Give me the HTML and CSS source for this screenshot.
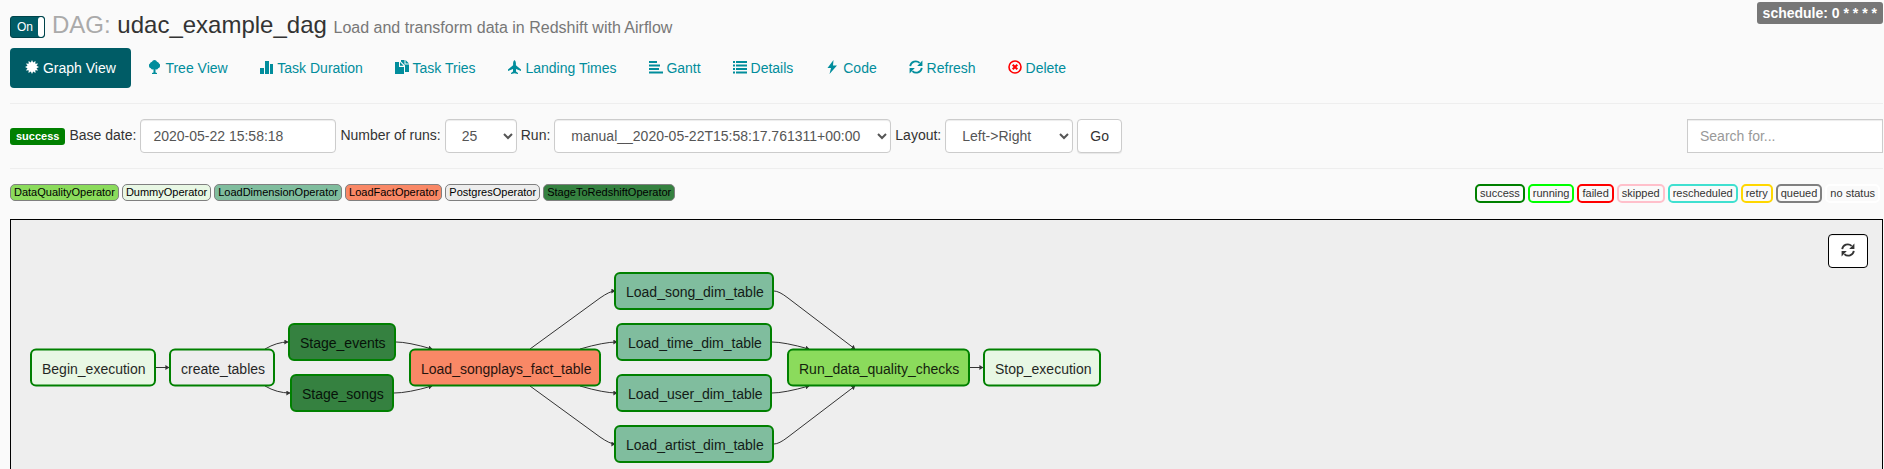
FILE: index.html
```html
<!DOCTYPE html>
<html lang="en">
<head>
<meta charset="utf-8">
<title>Airflow - DAGs</title>
<link rel="stylesheet" href="styles.css">
</head>
<body>
<svg class="sprite" aria-hidden="true">
  <symbol id="i-refresh" viewBox="0 0 14 14">
    <path d="M1.2 6.2A5.6 5.6 0 0 1 10.6 2.9M12.8 7.8A5.6 5.6 0 0 1 3.4 11.1" fill="none" stroke="currentColor" stroke-width="1.8"/>
    <path d="M13.4 0.6V6H8.2ZM.6 13.4V8H5.8Z" fill="currentColor"/>
  </symbol>
</svg>

<header class="heading">
  <button type="button" class="toggle" aria-pressed="true"><span class="toggle-label">On</span><span class="toggle-handle"></span></button>
  <h1 class="title"><span class="muted">DAG:</span> udac_example_dag <small class="description">Load and transform data in Redshift with Airflow</small></h1>
  <a href="#" class="schedule">schedule: 0 * * * *</a>
</header>

<nav class="pills">
  <a href="#" class="pill active"><svg class="icon" viewBox="0 0 14 14"><path d="M7 0L8.2 2.5 10.5 .9 10.3 3.7 13.1 3.5 11.5 5.8 14 7 11.5 8.2 13.1 10.5 10.3 10.3 10.5 13.1 8.2 11.5 7 14 5.8 11.5 3.5 13.1 3.7 10.3 .9 10.5 2.5 8.2 0 7 2.5 5.8 .9 3.5 3.7 3.7 3.5 .9 5.8 2.5z"/></svg> Graph View</a>
  <a href="#" class="pill"><svg class="icon" viewBox="0 0 14 14"><path d="M6.5 0Q8.4.1 9 1.7 10.9 2 11 3.6 12.5 4.3 12 6.2 12 7.8 10.2 8.2 9.4 9.8 7.5 9.3V12.5L9 13V14H4V13L5.5 12.5V9.3Q3.6 9.8 2.8 8.2 1 7.8 1 6.2 .5 4.3 2 3.6 2.1 2 4 1.7 4.6 .1 6.5 0Z"/></svg> Tree View</a>
  <a href="#" class="pill"><svg class="icon" viewBox="0 0 14 14"><path d="M0 8h4v6H0zM5 1h4v13H5zM10 4h3v10h-3z"/></svg> Task Duration</a>
  <a href="#" class="pill"><svg class="icon" viewBox="0 0 14 14"><path d="M0 2H4V7H9V14H0zM5 2L8.6 5.8H5zM6 0H9.5V4.5H14V12H10V5.5L6 1.5zM10.5 0L14 3.5H10.5z"/></svg> Task Tries</a>
  <a href="#" class="pill"><svg class="icon" viewBox="0 0 14 14"><path d="M6.5 0Q7.800.8 7.900 3V5.200L13 9.500V11L8 9V11.500L10 13V14L6.500 13.200 3 14V13L5 11.500V9L0 11V9.500L5.100 5.200V3Q5.200.8 6.500 0Z"/></svg> Landing Times</a>
  <a href="#" class="pill"><svg class="icon" viewBox="0 0 14 14"><path d="M0 1h8v2H0zM0 4.500h11v2H0zM0 8h10v2H0zM0 11.500h14v2H0z"/></svg> Gantt</a>
  <a href="#" class="pill"><svg class="icon" viewBox="0 0 14 14"><path d="M0 1h2v2H0zM3 1h11v2H3zM0 4.500h2v2H0zM3 4.500h11v2H3zM0 8h2v2H0zM3 8h11v2H3zM0 11.500h2v2H0zM3 11.500h11v2H3z"/></svg> Details</a>
  <a href="#" class="pill"><svg class="icon" viewBox="0 0 14 14"><path d="M8.500 0L2.500 8H6L4.500 14 12 5.500H8z"/></svg> Code</a>
  <a href="#" class="pill"><svg class="icon"><use href="#i-refresh"/></svg> Refresh</a>
  <a href="#" class="pill"><svg class="icon danger" viewBox="0 0 14 14"><circle cx="7" cy="7" r="6" fill="none" stroke="currentColor" stroke-width="1.6"/><path d="M4.700 4.700l4.600 4.600M9.300 4.700L4.700 9.300" fill="none" stroke="currentColor" stroke-width="2"/></svg> Delete</a>
</nav>

<section class="filters">
  <form class="form">
    <span class="state">success</span>
    <label for="base">Base date:</label>
    <input class="control" id="base" type="text" value="2020-05-22 15:58:18">
    <label for="runs">Number of runs:</label>
    <select class="control short" id="runs"><option>5</option><option selected>25</option><option>100</option></select>
    <label for="run">Run:</label>
    <select class="control long" id="run"><option>manual__2020-05-22T15:58:17.761311+00:00</option></select>
    <label for="layout">Layout:</label>
    <select class="control medium" id="layout"><option>Left-&gt;Right</option><option>Top-&gt;Bottom</option></select>
    <button class="control go" type="button">Go</button>
  </form>
  <input class="control search" type="text" placeholder="Search for..." aria-label="Search for">
</section>

<section class="legend">
  <div class="tags">
    <span class="operator quality">DataQualityOperator</span>
    <span class="operator dummy">DummyOperator</span>
    <span class="operator dimension">LoadDimensionOperator</span>
    <span class="operator fact">LoadFactOperator</span>
    <span class="operator postgres">PostgresOperator</span>
    <span class="operator stage">StageToRedshiftOperator</span>
  </div>
  <div class="tags">
    <span class="status success">success</span>
    <span class="status running">running</span>
    <span class="status failed">failed</span>
    <span class="status skipped">skipped</span>
    <span class="status rescheduled">rescheduled</span>
    <span class="status retry">retry</span>
    <span class="status queued">queued</span>
    <span class="status none">no status</span>
  </div>
</section>

<main class="canvas">
  <svg class="graph" width="1100" height="248" role="img" aria-label="Task graph">
    <defs>
      <marker id="arrow" viewBox="0 0 10 10" refX="9" refY="5" markerWidth="4" markerHeight="5" markerUnits="userSpaceOnUse" preserveAspectRatio="none" orient="auto"><path d="M0 0L10 5L0 10z" fill="#333"/></marker>
    </defs>
    <g transform="translate(-11 -220)">
      <g class="edges">
        <path d="M156 367.500H169"/>
        <path d="M265 349Q277 342 288 342"/>
        <path d="M265 386Q277 393 290 393"/>
        <path d="M396 342Q408 342 432 349"/>
        <path d="M394 393Q408 393 432 386"/>
        <path d="M530 349L600 298Q610 291 615 291"/>
        <path d="M580 349Q604 342 617 342"/>
        <path d="M580 386Q604 393 617 393"/>
        <path d="M530 386L600 437Q610 444 615 444"/>
        <path d="M774 291Q779 291 788 298L855 349"/>
        <path d="M772 342Q784 342 809 349"/>
        <path d="M772 393Q784 393 809 386"/>
        <path d="M774 444Q779 444 788 437L855 386"/>
        <path d="M970 367.500H983"/>
      </g>
      <g class="nodes">
        <rect class="dummy" x="31" y="349.500" width="124" height="36" rx="5"/><text x="42" y="374">Begin_execution</text>
        <rect class="postgres" x="170" y="349.500" width="104" height="36" rx="5"/><text x="181" y="374">create_tables</text>
        <rect class="stage" x="289" y="324" width="106" height="36" rx="5"/><text x="300" y="348">Stage_events</text>
        <rect class="stage" x="291" y="375" width="102" height="36" rx="5"/><text x="302" y="399">Stage_songs</text>
        <rect class="fact" x="410" y="349.500" width="190" height="36" rx="5"/><text x="421" y="374">Load_songplays_fact_table</text>
        <rect class="dimension" x="615" y="273" width="158" height="36" rx="5"/><text x="626" y="297">Load_song_dim_table</text>
        <rect class="dimension" x="617" y="324" width="154" height="36" rx="5"/><text x="628" y="348">Load_time_dim_table</text>
        <rect class="dimension" x="617" y="375" width="154" height="36" rx="5"/><text x="628" y="399">Load_user_dim_table</text>
        <rect class="dimension" x="615" y="426" width="158" height="36" rx="5"/><text x="626" y="450">Load_artist_dim_table</text>
        <rect class="quality" x="788" y="349.500" width="181" height="36" rx="5"/><text x="799" y="374">Run_data_quality_checks</text>
        <rect class="dummy" x="984" y="349.500" width="116" height="36" rx="5"/><text x="995" y="374">Stop_execution</text>
      </g>
    </g>
  </svg>
  <button class="control reload" type="button" aria-label="Refresh"><svg class="icon"><use href="#i-refresh"/></svg></button>
</main>
</body>
</html>
```

FILE: styles.css
```css
* { box-sizing: border-box; }

body {
  margin: 0;
  min-height: 100vh;
  padding: 2px 1px 0 10px;
  display: flex;
  flex-direction: column;
  background: #fafafa;
  color: #333;
  font: 14px/20px "Liberation Sans", Arial, sans-serif;
}

.sprite { display: none; }

.heading {
  display: flex;
  align-items: flex-start;
  gap: 7px;
  height: 46px;
}

.toggle {
  display: flex;
  width: 35px;
  height: 22px;
  margin-top: 14px;
  padding: 0;
  border: 1px solid #00434a;
  border-radius: 3px;
  overflow: hidden;
  background: #005c66;
  color: #fff;
  font: 12px/20px "Liberation Sans", Arial, sans-serif;
}

.toggle-label { flex: 1; padding-left: 1px; }

.toggle-handle {
  width: 6px;
  height: 20px;
  border-radius: 3px;
  background: #fff;
}

.title {
  flex: 1;
  margin: 9px 0 0;
  font-size: 24px;
  font-weight: 400;
  line-height: 28px;
}

.muted { color: #aaa; }
.description { font-size: 16px; color: #777; }

.schedule {
  padding: 0 6px;
  border-radius: 3px;
  background: #777;
  color: #fff;
  font-size: 14px;
  font-weight: 700;
  line-height: 22px;
  text-decoration: none;
}

.pills {
  display: flex;
  gap: 2px;
  padding-bottom: 15px;
  border-bottom: 1px solid #eee;
}

.pill {
  padding: 10px 15px;
  border-radius: 4px;
  color: #018d9c;
  text-decoration: none;
}

.pill.active { background: #005c66; color: #fff; }

.icon {
  width: 14px;
  height: 14px;
  vertical-align: -1px;
  fill: currentColor;
}

.icon.danger { color: #f00; }

.filters {
  display: flex;
  justify-content: space-between;
  padding: 15px 0;
  border-bottom: 1px solid #eee;
}

.form { display: flex; align-items: center; gap: 4px; }
.form label { padding-bottom: 2px; }

.state {
  padding: 0 6px;
  border-radius: 3px;
  background: #008000;
  color: #fff;
  font-size: 11px;
  font-weight: 700;
  line-height: 17px;
}

.control {
  height: 34px;
  padding: 6px 12px;
  border: 1px solid #ccc;
  border-radius: 4px;
  background-color: #fff;
  box-shadow: inset 0 1px 1px rgba(0, 0, 0, .075);
  color: #555;
  font: 14px/20px "Liberation Sans", Arial, sans-serif;
}

input.control { width: 196px; }
.control.short { width: 72px; }
.control.medium { width: 128px; }
.control.long { width: 337px; }
.control.search { border-radius: 0; }
.control::placeholder { color: #999; opacity: 1; }
.control.go { color: #333; box-shadow: 0 1px 1px rgba(0, 0, 0, .075); }

.legend {
  display: flex;
  justify-content: space-between;
  align-items: flex-start;
  padding: 15px 3px 16px 0;
  font-size: 11px;
}

.tags { display: flex; align-items: flex-start; gap: 3px; }

.operator {
  padding: 0 3px;
  border: 1px solid #808080;
  border-radius: 5px;
  color: #000;
  line-height: 15px;
}

.status {
  padding: 0 3px;
  border: 2px solid;
  border-radius: 5px;
  line-height: 15px;
}

.operator.quality { background: #8bdb5c; }
.operator.dummy { background: #e8f7e4; }
.operator.dimension { background: #80bd9e; }
.operator.fact { background: #f98866; }
.operator.postgres { background: #ededed; }
.operator.stage { background: #358140; }

.status.success { border-color: #008000; }
.status.running { border-color: #0f0; }
.status.failed { border-color: #f00; }
.status.skipped { border-color: #ffc0cb; }
.status.rescheduled { border-color: #40e0d0; }
.status.retry { border-color: #ffd700; }
.status.queued { border-color: #808080; }
.status.none { border-color: #fff; }

.canvas {
  flex: 1;
  display: flex;
  justify-content: space-between;
  align-items: flex-start;
  border: 1px solid #000;
  border-bottom: 0;
  background: #eee;
}

.graph { display: block; }

.edges path {
  fill: none;
  stroke: #333;
  stroke-width: 1px;
  marker-end: url(#arrow);
}

.nodes rect { stroke: #008000; stroke-width: 2px; }
.nodes text { font-size: 14px; fill: #000; opacity: .85; }

.nodes .quality { fill: #8bdb5c; }
.nodes .dummy { fill: #e8f7e4; }
.nodes .dimension { fill: #80bd9e; }
.nodes .fact { fill: #f98866; }
.nodes .postgres { fill: #ededed; }
.nodes .stage { fill: #358140; }

.reload {
  margin: 14px 14px 0 0;
  border-color: #000;
  color: #333;
}
```
